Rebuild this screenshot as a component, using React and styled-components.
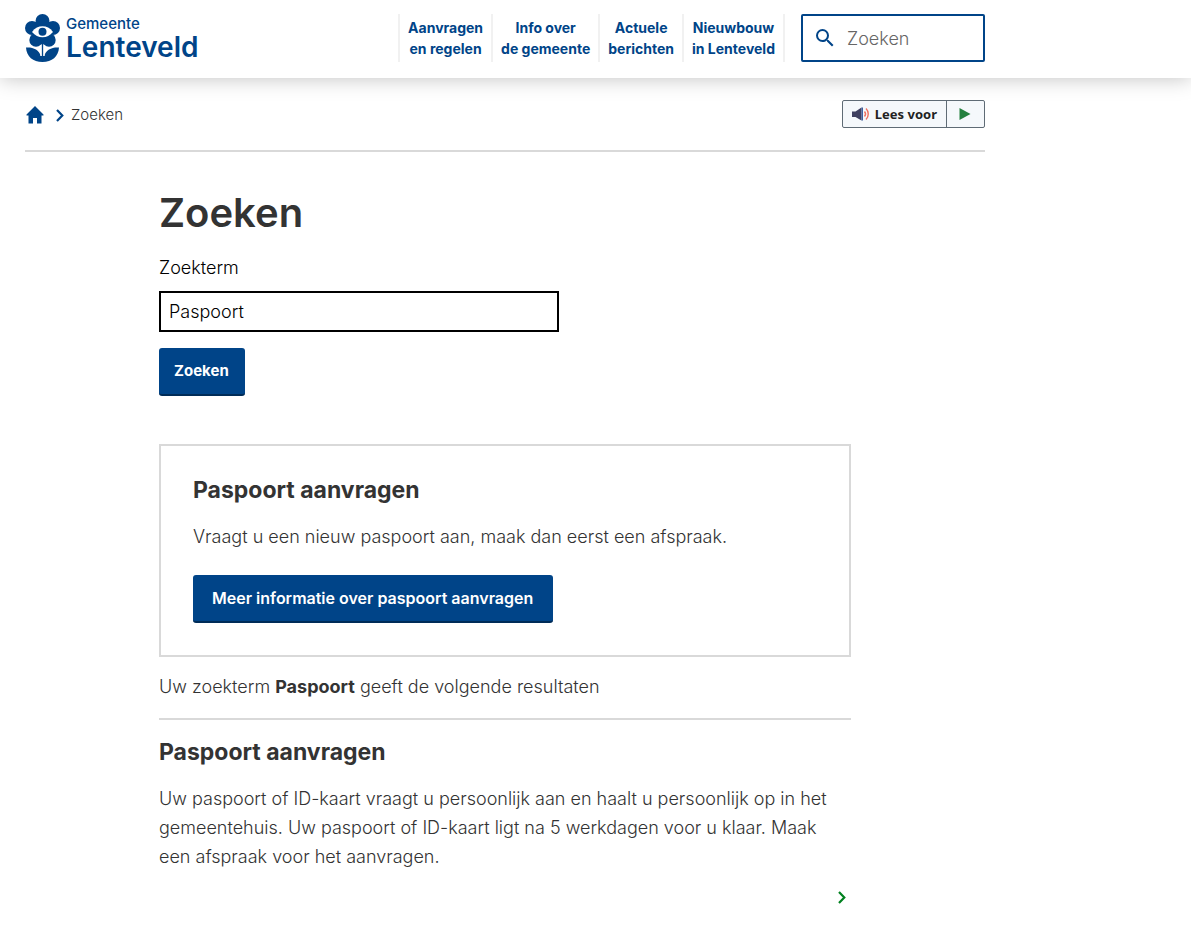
import React, { useState } from "react";
import styled, { createGlobalStyle } from "styled-components";

const COLORS = {
  primary: "#004488",
  primaryDark: "#002c58",
  text: "#333333",
  border: "#d9d9d9",
  navBorder: "#f1f1f1",
  green: "#00811f",
};

const NAV_ITEMS = [
  ["Aanvragen", "en regelen"],
  ["Info over", "de gemeente"],
  ["Actuele", "berichten"],
  ["Nieuwbouw", "in Lenteveld"],
];

const App = () => {
  const [term, setTerm] = useState("Paspoort");

  return (
    <>
      <GlobalStyle />
      <Header>
        <HeaderInner>
          <Logo href="#">
            <FlowerIcon />
            <LogoText>
              <LogoSmall>Gemeente</LogoSmall>
              <LogoLarge>Lenteveld</LogoLarge>
            </LogoText>
          </Logo>
          <Nav>
            {NAV_ITEMS.map(([first, second]) => {
              return (
                <NavLink href="#" key={first}>
                  {first}
                  <br />
                  {second}
                </NavLink>
              );
            })}
          </Nav>
          <SearchBox>
            <SearchIcon />
            <SearchInput type="text" placeholder="Zoeken" aria-label="Zoeken" />
          </SearchBox>
        </HeaderInner>
      </Header>
      <Page>
        <TopBar>
          <Breadcrumb aria-label="Kruimelpad">
            <HomeLink href="#" aria-label="Home">
              <HomeIcon />
            </HomeLink>
            <Chevron color={COLORS.primary} />
            <span>Zoeken</span>
          </Breadcrumb>
          <Reader>
            <ReaderButton type="button">
              <SpeakerIcon />
              Lees voor
            </ReaderButton>
            <PlayButton type="button" aria-label="Afspelen">
              <PlayIcon />
            </PlayButton>
          </Reader>
        </TopBar>
        <Main>
          <Title>Zoeken</Title>
          <form onSubmit={(ev) => ev.preventDefault()}>
            <Label htmlFor="term">Zoekterm</Label>
            <TermInput
              id="term"
              type="text"
              value={term}
              onChange={(ev) => setTerm(ev.target.value)}
            />
            <SubmitButton type="submit">Zoeken</SubmitButton>
          </form>
          <Card>
            <Heading>Paspoort aanvragen</Heading>
            <Text>Vraagt u een nieuw paspoort aan, maak dan eerst een afspraak.</Text>
            <ButtonLink href="#">Meer informatie over paspoort aanvragen</ButtonLink>
          </Card>
          <Summary>
            Uw zoekterm <strong>Paspoort</strong> geeft de volgende resultaten
          </Summary>
          <Result>
            <Heading>Paspoort aanvragen</Heading>
            <Text>
              Uw paspoort of ID-kaart vraagt u persoonlijk aan en haalt u
              persoonlijk op in het gemeentehuis. Uw paspoort of ID-kaart ligt na
              5 werkdagen voor u klaar. Maak een afspraak voor het aanvragen.
            </Text>
            <MoreLink href="#" aria-label="Paspoort aanvragen">
              <Chevron color={COLORS.green} />
            </MoreLink>
          </Result>
        </Main>
      </Page>
    </>
  );
};

const FlowerIcon = () => (
  <svg width="35" height="48" viewBox="0 0 35 48" aria-hidden="true">
    <g fill={COLORS.primary}>
      <circle cx="17.5" cy="7" r="7" />
      <circle cx="7" cy="14" r="7" />
      <circle cx="28" cy="14" r="7" />
      <circle cx="11" cy="26" r="6.7" />
      <circle cx="24" cy="26" r="6.7" />
      <path d="M8 8h19v22H8z" />
      <path d="M16.600 30h1.800v14h-1.800z" />
      <path d="M1 33.500c7-.5 13 2 14.800 8.500h3.400C21 35.500 27 33 34 33.500 33.500 42.500 27 48 17.500 48S1.500 42.500 1 33.500z" />
    </g>
    <path
      d="M7 18c3-4 6.500-5.700 10.500-5.700S25 14 28 18c-3 3.600-6.500 5.300-10.500 5.300S10 21.600 7 18z"
      fill="#fff"
    />
    <circle cx="17.500" cy="17.800" r="4" fill={COLORS.primary} />
    <path d="M16 31v11M19 31v11" stroke="#fff" strokeWidth="1.200" />
  </svg>
);

const SearchIcon = () => (
  <svg width="24" height="24" viewBox="0 0 24 24" aria-hidden="true">
    <path
      fill={COLORS.primary}
      d="M15.500 14h-.79l-.28-.27A6.471 6.471 0 0 0 16 9.500 6.500 6.500 0 1 0 9.500 16c1.610 0 3.090-.59 4.230-1.570l.27.28v.79l5 4.990L20.490 19l-4.990-5zm-6 0C7.010 14 5 11.990 5 9.500S7.010 5 9.500 5 14 7.010 14 9.500 11.990 14 9.500 14z"
    />
  </svg>
);

const HomeIcon = () => (
  <svg width="18" height="18" viewBox="0 0 18 18" aria-hidden="true">
    <path
      fill={COLORS.primary}
      d="M9 0 .5 8.500V9.500H2.500V17.500H7V12H11V17.500H15.500V9.500H17.500V8.500z"
    />
  </svg>
);

const Chevron = ({ color }) => (
  <svg width="8" height="14" viewBox="0 0 8 14" aria-hidden="true">
    <path d="M1 2l5.300 5.500L1 13" fill="none" stroke={color} strokeWidth="2.200" />
  </svg>
);

const SpeakerIcon = () => (
  <svg width="18" height="14" viewBox="0 0 18 14" aria-hidden="true">
    <path d="M0 4.500h3.500L9.500.5v13l-6-3.500H0z" fill="#3f3f5f" />
    <path d="M9.500.5H11v13H9.500z" fill="#3f5f9f" />
    <path
      d="M12.500 4.500c1.300 1.500 1.300 3.500 0 5M14 1.500c3 3 3 8 0 11"
      fill="none"
      stroke="#f0705f"
      strokeWidth="1.400"
    />
  </svg>
);

const PlayIcon = () => (
  <svg width="12" height="12" viewBox="0 0 12 12" aria-hidden="true">
    <path d="M.5 0 11.500 6 .5 12z" fill="#24803f" />
  </svg>
);

const GlobalStyle = createGlobalStyle`
  * {
    box-sizing: border-box;
  }

  body {
    margin: 0;
    background-color: #fff;
    color: ${COLORS.text};
    font-family: Inter, "Liberation Sans", sans-serif;
    font-size: 18px;
    font-weight: 300;
    line-height: 29px;
  }

  svg {
    display: block;
    flex: none;
  }

  input,
  button {
    font-family: inherit;
  }
`;

const Header = styled.header`
  background-color: #fff;
  box-shadow: 0 0 20px rgba(0, 0, 0, 0.25);
`;

const HeaderInner = styled.div`
  display: flex;
  align-items: center;
  max-width: 1010px;
  padding: 14px 25px 16px;
`;

const Logo = styled.a`
  display: flex;
  gap: 6px;
  color: ${COLORS.primary};
  text-decoration: none;
`;

const LogoText = styled.span`
  display: flex;
  flex-direction: column;
`;

const LogoSmall = styled.span`
  font-size: 15px;
  font-weight: 500;
  line-height: 20px;
`;

const LogoLarge = styled.span`
  font-size: 28px;
  font-weight: 600;
  line-height: 26px;
`;

const Nav = styled.nav`
  display: flex;
  margin-left: auto;
  margin-right: 16px;
  border-left: 2px solid ${COLORS.navBorder};
`;

const NavLink = styled.a`
  padding: 3px 8px;
  border-right: 2px solid ${COLORS.navBorder};
  color: ${COLORS.primary};
  font-size: 14px;
  font-weight: 700;
  line-height: 21px;
  text-align: center;
  text-decoration: none;
`;

const SearchBox = styled.div`
  display: flex;
  align-items: center;
  gap: 10px;
  width: 184px;
  height: 48px;
  padding: 0 10px;
  border: 2px solid ${COLORS.primary};
  border-radius: 2px;
`;

const SearchInput = styled.input`
  width: 100%;
  min-width: 0;
  padding: 0;
  border: 0;
  background: none;
  outline: none;
  font-size: 18px;
  font-weight: 300;

  &::placeholder {
    color: #666;
  }
`;

const Page = styled.div`
  max-width: 1010px;
  padding: 22px 25px;
`;

const TopBar = styled.div`
  display: flex;
  justify-content: space-between;
  align-items: flex-start;
  padding-bottom: 21px;
  border-bottom: 2px solid ${COLORS.border};
`;

const Breadcrumb = styled.nav`
  display: flex;
  align-items: center;
  gap: 7px;
  font-size: 15px;
`;

const HomeLink = styled.a`
  padding: 0 5px 0 1px;
`;

const Reader = styled.div`
  display: flex;
  height: 28px;
  border: 1px solid #5f6b75;
  border-radius: 2px;
  background-color: #f5f8fb;
`;

const ReaderButton = styled.button`
  display: flex;
  align-items: center;
  gap: 5px;
  padding: 0 9px;
  border: 0;
  background: none;
  color: #222;
  font-family: "Noto Sans", sans-serif;
  font-size: 13px;
  font-weight: 700;
`;

const PlayButton = styled.button`
  padding: 0 13px 0 12px;
  border: 0;
  border-left: 1px solid #5f6b75;
  background: none;
`;

const Main = styled.main`
  max-width: 692px;
  margin-left: 134px;
`;

const Title = styled.h1`
  margin: 36px 0 15px;
  font-size: 40px;
  font-weight: 600;
  line-height: 50px;
`;

const Label = styled.label`
  display: block;
  margin-bottom: 9px;
  color: #000;
`;

const TermInput = styled.input`
  display: block;
  width: 100%;
  max-width: 400px;
  height: 41px;
  padding: 0 8px;
  border: 2px solid #000;
  color: #000;
  font-size: 18px;
  font-weight: 300;
`;

const SubmitButton = styled.button`
  height: 48px;
  margin-top: 16px;
  padding: 0 16px 2px 15px;
  border: 0;
  border-bottom: 2px solid ${COLORS.primaryDark};
  border-radius: 3px;
  background-color: ${COLORS.primary};
  color: #fff;
  font-size: 15px;
  font-weight: 700;
`;

const Card = styled.section`
  margin-top: 48px;
  padding: 28px 32px 32px;
  border: 2px solid ${COLORS.border};
`;

const Heading = styled.h2`
  margin: 0 0 16px;
  font-size: 23px;
  font-weight: 700;
  line-height: 32px;
`;

const Text = styled.p`
  margin: 0;
`;

const ButtonLink = styled.a`
  display: inline-block;
  margin-top: 24px;
  padding: 9px 20px 9px 19px;
  border-bottom: 2px solid ${COLORS.primaryDark};
  border-radius: 3px;
  background-color: ${COLORS.primary};
  color: #fff;
  font-size: 16px;
  font-weight: 600;
  line-height: 28px;
  text-decoration: none;
  vertical-align: top;
`;

const Summary = styled.p`
  margin: 15px 0 17px;

  strong {
    font-weight: 700;
  }
`;

const Result = styled.article`
  padding-top: 16px;
  border-top: 2px solid ${COLORS.border};
`;

const MoreLink = styled.a`
  display: flex;
  justify-content: flex-end;
  margin-top: 19px;
  padding-right: 5px;
`;

export default App;
